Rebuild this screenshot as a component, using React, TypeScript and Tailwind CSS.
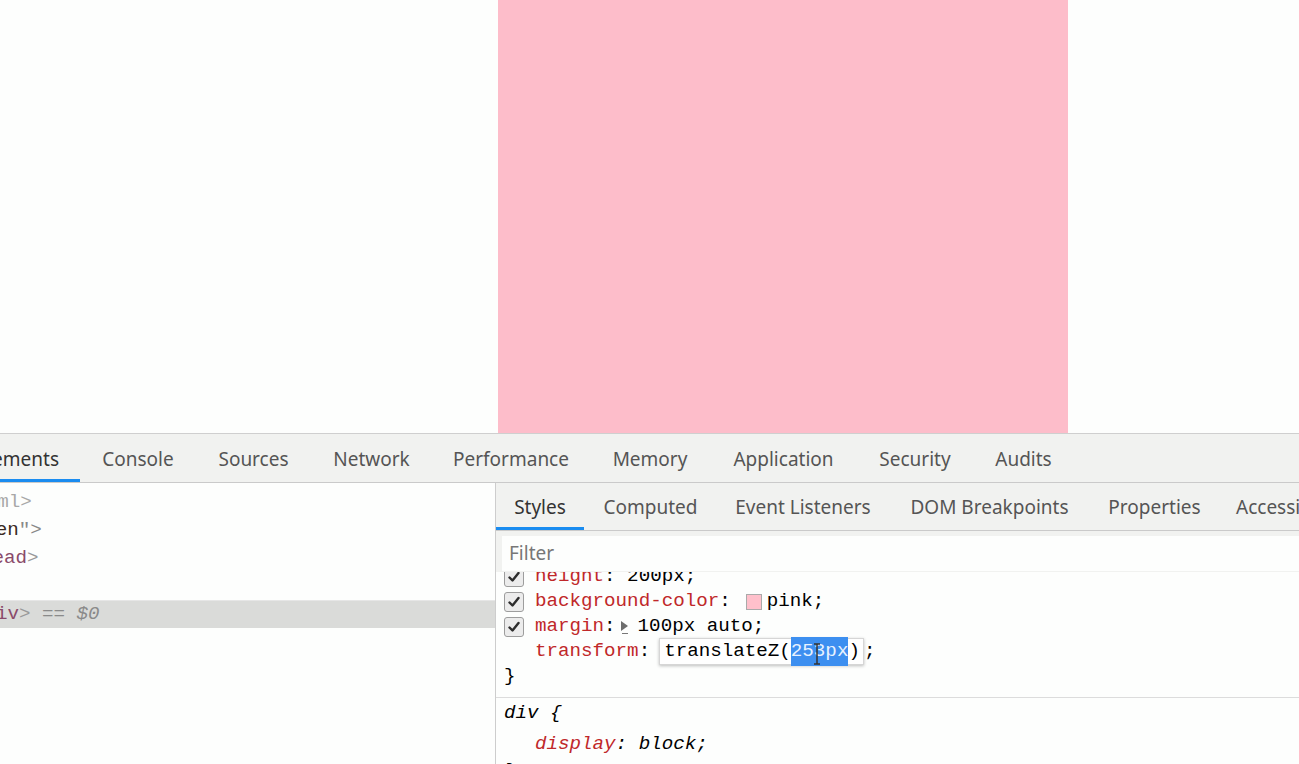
const mono = "font-['Liberation_Mono','DejaVu_Sans_Mono',monospace]";

const mainTabs = [
  { label: "Elements", w: "w-[80px]", active: true },
  { label: "Console", w: "w-[116px]" },
  { label: "Sources", w: "w-[115px]" },
  { label: "Network", w: "w-[121px]" },
  { label: "Performance", w: "w-[158px]" },
  { label: "Memory", w: "w-[120px]" },
  { label: "Application", w: "w-[147px]" },
  { label: "Security", w: "w-[116px]" },
  { label: "Audits", w: "w-[101px]" },
];

const subTabs = [
  { label: "Styles", w: "w-[88px]", active: true },
  { label: "Computed", w: "w-[133px]" },
  { label: "Event Listeners", w: "w-[172px]" },
  { label: "DOM Breakpoints", w: "w-[201px]" },
  { label: "Properties", w: "w-[129px]" },
];

const Check = ({ on = true }: { on?: boolean }) => (
  <div className="w-5 h-5 shrink-0 rounded-[3px] border border-[#9d9d9d] bg-[#ececec] flex items-center justify-center">
    {on && (
      <svg width="14" height="14" viewBox="0 0 14 14">
        <path d="M2.5 7.5 L5.5 10.5 L11.5 3" stroke="#2d2d2d" strokeWidth="2.4" fill="none" strokeLinecap="round" strokeLinejoin="round" />
      </svg>
    )}
  </div>
);

export default function App() {
  return (
    <div className="w-[1299px] h-[764px] overflow-hidden bg-[#fdfefd] flex flex-col font-['Noto_Sans','Open_Sans',sans-serif]">
      {/* page viewport */}
      <div className="h-[433px] shrink-0 flex">
        <div className="w-[498px]" />
        <div className="w-[570px] h-full bg-[#fdbdca]" />
      </div>

      {/* devtools */}
      <div className="flex-1 flex flex-col border-t border-[#cfcfcf] min-h-0">
        <div className="h-[49px] shrink-0 flex bg-[#f1f2f0] border-b border-[#cacaca] text-[19px] text-[#555]">
          {mainTabs.map((t) => (
            <div
              key={t.label}
              className={`${t.w} shrink-0 relative flex items-center justify-center whitespace-nowrap pt-[3px] ${
                t.active ? "justify-end text-[#333] border-b-[3px] border-[#1a8cf0] pt-[6px]" : ""
              }`}
            >
              {t.active ? <span className="pr-[21px]">Elements</span> : t.label}
            </div>
          ))}
        </div>

        <div className="flex-1 flex min-h-0">
          {/* elements tree */}
          <div className={`w-[496px] shrink-0 border-r border-[#cdcdcd] bg-[#fdfefd] pt-[5px] overflow-hidden text-[19.2px] ${mono}`}>
            <div className="h-[28px] flex items-center whitespace-nowrap text-[#a8a8a8]">
              <span className="ml-[-141px]">&lt;!DOCTYPE html&gt;</span>
            </div>
            <div className="h-[28px] flex items-center whitespace-nowrap">
              <span className="ml-[-131px] text-[#881280]">&lt;html </span>
              <span className="text-[#994500]">lang</span>
              <span className="text-[#555]">="</span>
              <span className="text-[#3a2a22]">en</span>
              <span className="text-[#888]">"&gt;</span>
            </div>
            <div className="h-[28px] flex items-center whitespace-nowrap">
              <span className="ml-[-19px] text-[#8a4a6a]">head</span>
              <span className="text-[#999]">&gt;</span>
            </div>
            <div className="h-[28px]" />
            <div className="h-[28px] flex items-center whitespace-pre bg-[#dadbd9] border-t border-[#e6e6e6]">
              <span className="ml-[-4px] text-[#8a4a6a]">iv</span>
              <span className="text-[#999]">&gt;</span>
              <span className="italic text-[#8a8a8a]">{" == $0"}</span>
            </div>
          </div>

          {/* styles pane */}
          <div className="flex-1 flex flex-col min-w-0">
            <div className="h-[48px] shrink-0 flex bg-[#f1f2f0] border-b border-[#cacaca] text-[19px] text-[#555]">
              {subTabs.map((t) => (
                <div
                  key={t.label}
                  className={`${t.w} shrink-0 flex items-center justify-center whitespace-nowrap pt-[1px] ${
                    t.active ? "text-[#333] border-b-[3px] border-[#1a8cf0] pt-[4px]" : ""
                  }`}
                >
                  {t.label}
                </div>
              ))}
              <div className="flex items-center pl-[17px] pt-[1px] whitespace-nowrap">Accessibility</div>
            </div>

            <div className="h-[41px] shrink-0 bg-[#f1f2f0] pt-[5px] pl-[6px]">
              <div className="h-[35px] bg-[#fdfefd] flex items-center pl-[7px] text-[19px] text-[#777]">Filter</div>
            </div>

            <div className={`flex-1 overflow-hidden text-[19.2px] ${mono}`}>
              <div className="mt-[-8px] pl-[8px] border-b border-[#dcdcdc] pb-[8px]">
                <div className="h-[25px] flex items-center gap-[11px] whitespace-nowrap">
                  <Check />
                  <span className="text-[#c0282a]">height</span>
                  <span className="ml-[-11px]">: 200px;</span>
                </div>
                <div className="h-[25px] flex items-center gap-[11px] whitespace-nowrap">
                  <Check />
                  <span>
                    <span className="text-[#c0282a]">background-color</span>:
                  </span>
                  <span className="flex items-center">
                    <span className="w-4 h-4 ml-[4px] bg-[#ffc0cb] border border-[#aaa] mr-[5px]" />
                    pink;
                  </span>
                </div>
                <div className="h-[25px] flex items-center gap-[11px] whitespace-nowrap">
                  <Check />
                  <span className="flex items-center">
                    <span className="text-[#c0282a]">margin</span>:
                    <svg width="12" height="14" viewBox="0 0 12 14" className="ml-[3px] mr-[7px]">
                      <path d="M2 1 L9 6 L2 11 Z" fill="#6d6d6d" />
                      <path d="M3 13.5 H9" stroke="#777" strokeWidth="1" />
                    </svg>
                    100px auto;
                  </span>
                </div>
                <div className="h-[25px] flex items-center whitespace-nowrap pl-[31px]">
                  <span className="text-[#c0282a]">transform</span>:
                  <span className="relative ml-[9px] h-[27px] flex items-center pl-[4px] pr-[3px] bg-white border border-[#d6d6d6] shadow-[0_1px_3px_rgba(0,0,0,0.25)]">
                    translateZ(
                    <span className="bg-[#3d8ff0] text-[#e8f2ff]">253px</span>)
                    <svg width="8" height="22" viewBox="0 0 8 22" className="absolute left-[153px] top-[4px]">
                      <path d="M1 1 H7 M4 1 V21 M1 21 H7" stroke="#333" strokeWidth="1.5" fill="none" />
                    </svg>
                  </span>
                  ;
                </div>
                <div className="h-[25px] flex items-center">{"}"}</div>
              </div>

              <div className="pl-[8px] italic">
                <div className="h-[31px] flex items-center">div {"{"}</div>
                <div className="h-[30px] flex items-center pl-[31px] whitespace-nowrap">
                  <span className="text-[#c0282a]">display</span>: block;
                </div>
                <div className="h-[25px] flex items-center">{"}"}</div>
              </div>
            </div>
          </div>
        </div>
      </div>
    </div>
  );
}
